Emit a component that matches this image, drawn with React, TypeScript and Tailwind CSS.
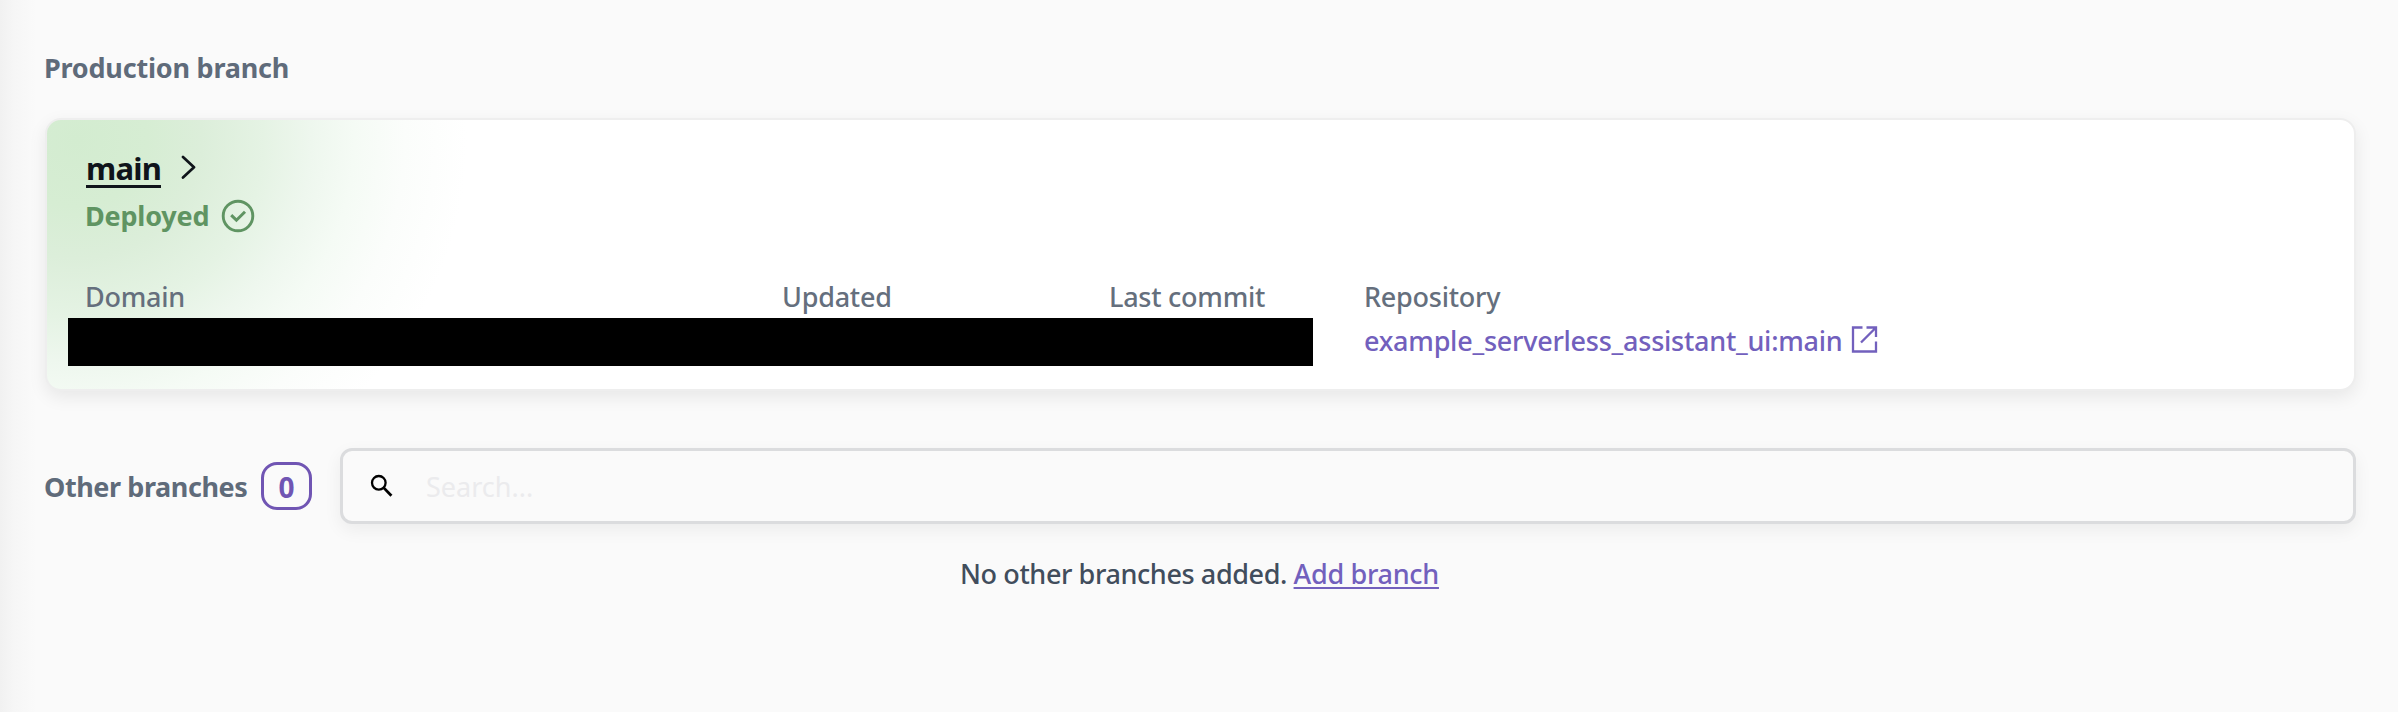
import type { ReactNode } from "react";

function Label({ children }: { children: ReactNode }) {
  return <div className="h-10 text-[27px] leading-10 font-medium tracking-[-0.25px] text-[#656f7d]">{children}</div>;
}

function ProductionCard() {
  return (
    <section className="mt-[30px] h-[273px] rounded-2xl border-2 border-[#eeeeee] bg-white bg-[radial-gradient(ellipse_390px_370px_at_30px_20px,#d3ecd0_0%,#d6edd3_18%,#dceeda_32%,#e5f3e4_48%,#eef7ee_60%,#f5fbf5_71%,#fbfdfb_84%,#ffffff_100%)] pt-[29px] pl-[39px] shadow-[0_6px_18px_rgba(0,0,0,0.08)]">
      <div className="flex h-10 items-center">
        <a href="#main" className="border-b-[3px] border-[#0f141a] text-[31px] leading-[34px] font-bold tracking-[-0.75px] text-[#0f141a]">
          main
        </a>
        <svg className="mb-1 ml-5 h-6 w-4" viewBox="0 0 16 24" fill="none" stroke="#0f141a" strokeWidth="2.7">
          <path d="M2 2L13 12.3L2 22.5" strokeLinecap="round" strokeLinejoin="round" />
        </svg>
      </div>
      <div className="mt-[7px] -ml-px flex h-10 items-center text-[27px] leading-10 font-bold tracking-[-0.2px] text-[#5f9462]">
        <span>Deployed</span>
        <svg className="ml-3 h-[34px] w-[34px]" viewBox="0 0 34 34" fill="none" stroke="#5f9462" strokeWidth="2.9">
          <circle cx="17" cy="17" r="14.8" />
          <path d="M10.2 16.2L15.4 21.2L24 12.8" strokeWidth="3" />
        </svg>
      </div>
      <div className="mt-[41px] -ml-px grid grid-cols-[697px_327px_255px_auto]">
        <Label>Domain</Label>
        <Label>Updated</Label>
        <Label>Last commit</Label>
        <Label>Repository</Label>
        <div className="col-span-3 mt-px -ml-[17px] h-12 w-[1245px] bg-black" />
        <a href="#repository" className="mt-1 flex h-10 items-center text-[27px] leading-10 font-medium tracking-[-0.25px] text-[#7260bd]">
          example_serverless_assistant_ui:main
          <svg className="mb-1 ml-2 h-7 w-7" viewBox="0 0 28 28" fill="none" stroke="#7260bd" strokeWidth="2.3">
            <path d="M12.5 2.5H3V26.5H26V16.5M16.5 2.5H26V12M26 2.5L11 17.5" />
          </svg>
        </a>
      </div>
    </section>
  );
}

function OtherBranches() {
  return (
    <section>
      <div className="mt-[57px] flex h-[76px] items-center">
        <h2 className="mt-0.5 -ml-px w-[217px] text-[27px] leading-10 font-bold tracking-[-0.42px] whitespace-nowrap text-[#5f6b7a]">
          Other branches
        </h2>
        <span className="flex h-12 w-[51px] items-center justify-center rounded-2xl border-3 border-[#7055b3] pt-0.5 text-[28px] leading-10 font-bold text-[#7055b3]">
          0
        </span>
        <div className="ml-7 flex h-[76px] flex-1 items-center rounded-xl border-3 border-[#dbdcde] bg-[#fafafa] pl-7 shadow-[0_6px_18px_rgba(0,0,0,0.06)]">
          <svg className="-ml-px h-6 w-6" viewBox="0 0 24 24" fill="none" stroke="#000" strokeWidth="2.3">
            <circle cx="8.8" cy="8.8" r="6.8" />
            <path d="M13.6 13.6L21.4 21.8" strokeWidth="2.8" />
          </svg>
          <input
            type="text"
            placeholder="Search..."
            className="mt-0.5 ml-8 h-10 flex-1 bg-transparent text-[27px] leading-10 outline-none placeholder:text-[#ebebed]"
          />
        </div>
      </div>
      <p className="mt-[30px] pr-0.5 text-center text-[27px] leading-10 font-medium tracking-[-0.4px] text-[#414d5c]">
        No other branches added.{" "}
        <a href="#add" className="tracking-[-0.3px] text-[#7260bd] underline decoration-2 underline-offset-[3px]">
          Add branch
        </a>
      </p>
    </section>
  );
}

export default function App() {
  return (
    <main className="h-[712px] w-full bg-[#fafafa] bg-[linear-gradient(to_right,#f1f1f1_0,#f6f6f6_14px,#fafafa_36px)] pt-12 pr-[42px] pl-[45px] font-['Noto_Sans',sans-serif]">
      <h2 className="-ml-px h-10 text-[27px] leading-10 font-bold tracking-[-0.22px] text-[#5f6b7a]">Production branch</h2>
      <ProductionCard />
      <OtherBranches />
    </main>
  );
}
